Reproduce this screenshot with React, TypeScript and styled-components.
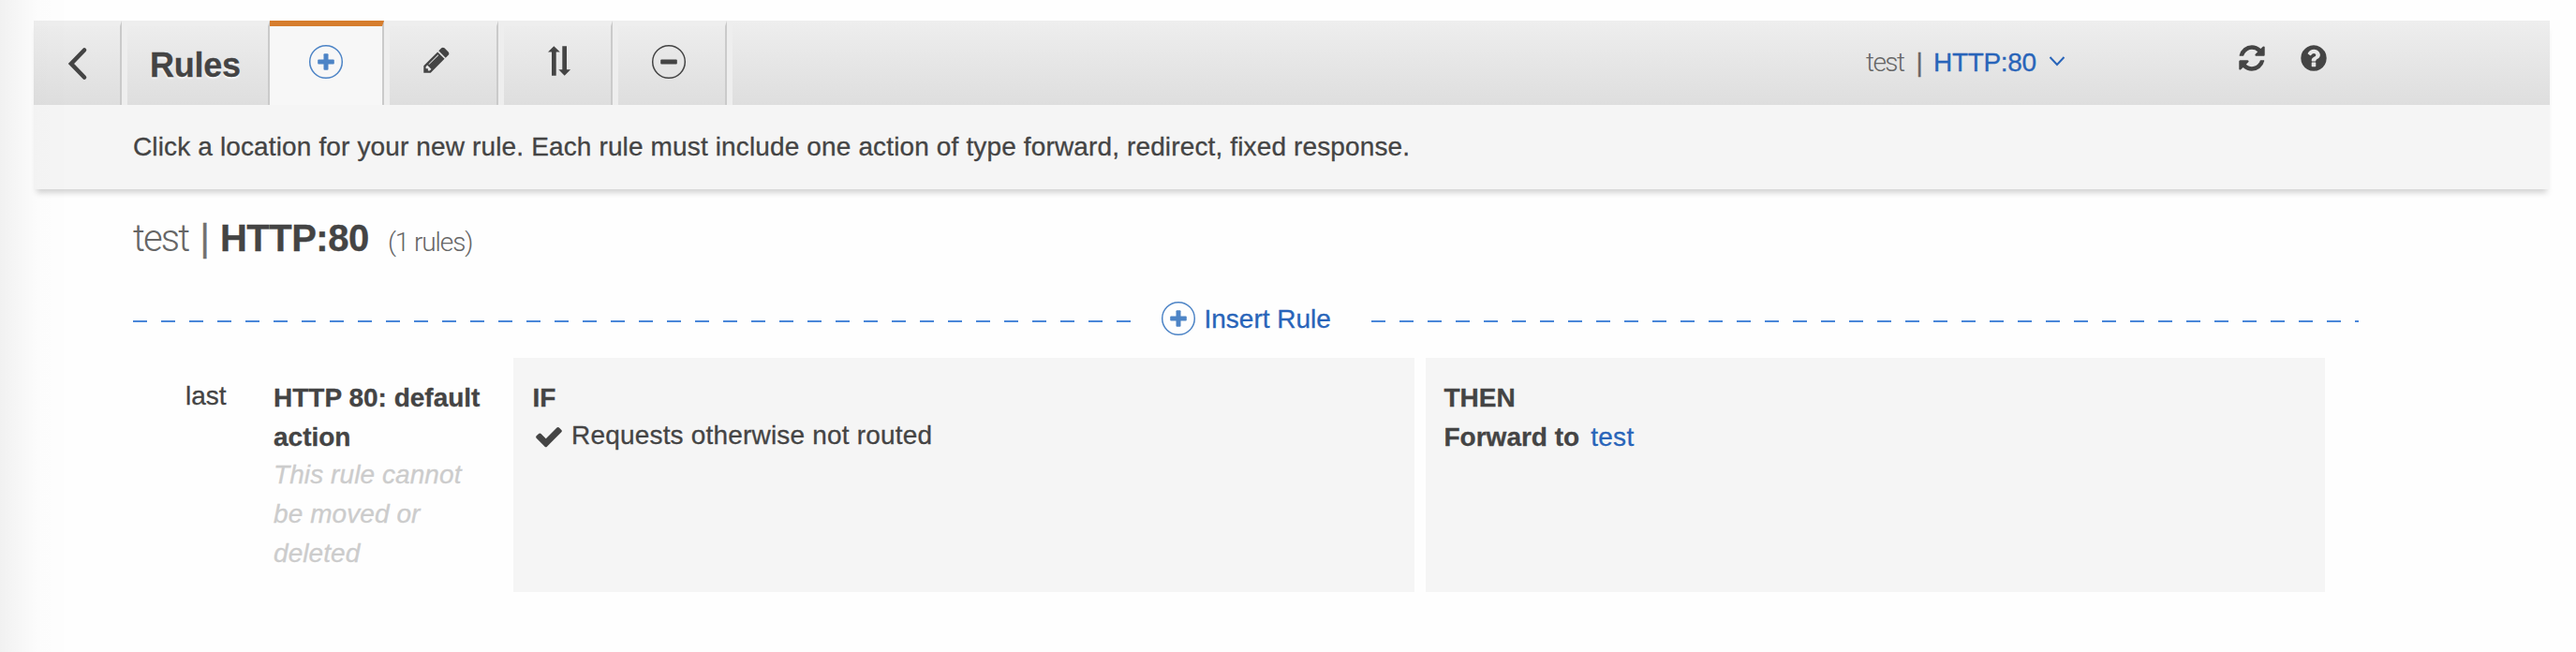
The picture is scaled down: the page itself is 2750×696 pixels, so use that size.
import React from "react";
import styled, { createGlobalStyle } from "styled-components";

const INK = "#444444";
const LINK = "#2864b9";
const ACTION = "#4d84c6";

const GlobalStyle = createGlobalStyle`
  *, *::before, *::after { box-sizing: border-box; }
  body {
    margin: 0;
    background: #fefefe;
    color: ${INK};
    font-family: "Liberation Sans", Arial, sans-serif;
    font-size: 28px;
    line-height: 42px;
    -webkit-text-stroke: 0.3px currentColor;
  }
  svg { display: block; flex: none; }
`;

const Page = styled.div`
  position: relative;
  height: 696px;
  padding: 22px 28px 0 36px;
  overflow: hidden;
  white-space: nowrap;
`;

const EdgeShade = styled.div`
  position: absolute;
  left: 0;
  top: 0;
  width: 68px;
  height: 100%;
  background: linear-gradient(to right, rgba(0, 0, 0, 0.05), rgba(0, 0, 0, 0.008) 60%, rgba(0, 0, 0, 0.004));
  pointer-events: none;
`;

const Header = styled.header`
  height: 180px;
  background: #f5f5f5;
  box-shadow: 0 7px 6px -3px rgba(0, 0, 0, 0.17);
`;

const Toolbar = styled.div`
  display: flex;
  height: 90px;
  background: linear-gradient(#eeeeee, #dedede);
`;

const Tab = styled.div<{ $width: number; $left: number; $top: number; $active?: boolean; $first?: boolean }>`
  display: flex;
  align-items: flex-start;
  width: ${(p) => p.$width}px;
  height: 90px;
  padding: ${(p) => p.$top}px 0 0 ${(p) => p.$left}px;
  border-style: solid;
  border-width: 6px 2px 0 ${(p) => (p.$active || p.$first ? 0 : 6)}px;
  border-color: ${(p) => (p.$active ? "#d67d2d" : "#eeeeee")} #cacaca transparent #eeeeee;
  background: ${(p) => (p.$active ? "#f7f7f7" : "transparent")};
  color: ${(p) => (p.$active ? ACTION : INK)};
`;

const TabTitle = styled.h1`
  margin: 0;
  font-size: 36px;
  line-height: 83px;
  font-weight: 700;
  letter-spacing: -0.25px;
  text-shadow: 0 2px 2px rgba(255, 255, 255, 0.85);
`;

const ToolbarEnd = styled.div`
  width: 6px;
  height: 90px;
  background: #eeeeee;
`;

const Listener = styled.div`
  display: flex;
  margin-left: auto;
  width: 396px;
  line-height: 89px;
`;

const ListenerOwner = styled.span`
  width: 53.5px;
  font-family: Roboto, sans-serif;
  font-weight: 300;
  letter-spacing: -1.6px;
  color: #666666;
  -webkit-text-stroke: 0;
`;

const ListenerBar = styled.span`
  width: 18.5px;
  color: #666666;
`;

const ListenerName = styled.a`
  width: 122px;
  letter-spacing: -0.33px;
  color: ${LINK};
`;

const CaretSlot = styled.span`
  padding-top: 36px;
  color: ${LINK};
`;

const Tools = styled.div`
  display: flex;
  gap: 34px;
  width: 334px;
  padding-top: 24px;
`;

const Hint = styled.p`
  margin: 0;
  padding-left: 106px;
  line-height: 89px;
  letter-spacing: 0.138px;
`;

const Content = styled.main`
  padding: 27px 0 0 106px;
`;

const Heading = styled.h2`
  display: grid;
  grid-template-columns: 71.5px 21.5px 179px auto;
  align-items: baseline;
  margin: 0;
  height: 50px;
  font-size: 40px;
  line-height: 50px;
  font-weight: 400;
`;

const HeadingOwner = styled.span`
  font-family: Roboto, sans-serif;
  font-weight: 300;
  letter-spacing: -1.9px;
  color: #666666;
  -webkit-text-stroke: 0;
`;

const HeadingBar = styled.span`
  color: #707070;
`;

const HeadingName = styled.span`
  font-weight: 700;
  letter-spacing: -0.52px;
`;

const RuleCount = styled.small`
  font-family: Roboto, sans-serif;
  font-size: 28px;
  font-weight: 300;
  letter-spacing: -1.1px;
  color: #666666;
  -webkit-text-stroke: 0;
`;

const InsertRow = styled.div`
  display: flex;
  height: 41px;
  margin-top: 41px;
`;

const Dashes = styled.div<{ $width: number }>`
  width: ${(p) => p.$width}px;
  height: 2px;
  margin-top: 22px;
  background: repeating-linear-gradient(to right, #4a87d9 0 15px, transparent 15px 30px);
`;

const InsertButton = styled.div`
  display: flex;
  gap: 8.5px;
  width: 254px;
  padding-left: 29px;
  line-height: 41px;
  color: ${LINK};

  svg {
    margin-top: 1px;
    color: ${ACTION};
  }
`;

const RuleRow = styled.section`
  display: grid;
  grid-template-columns: 150px 256px 962px 12px 960px;
  height: 250px;
  margin-top: 21px;
`;

const Position = styled.div`
  padding: 19.5px 0 0 56px;
`;

const RuleName = styled.div`
  width: 232px;
  padding-top: 21.5px;
  font-weight: 700;
  white-space: normal;
`;

const RuleNote = styled.p`
  margin: -2px 0 0;
  font-weight: 400;
  font-style: italic;
  letter-spacing: 0.08px;
  color: #cccccc;
`;

const Card = styled.div<{ $inset: number }>`
  padding: 21.5px 0 0 ${(p) => p.$inset}px;
  background: #f5f5f5;
`;

const CardTitle = styled.h3`
  margin: 0;
  font-size: 28px;
  line-height: 42px;
  font-weight: 700;
`;

const Condition = styled.div`
  display: flex;
  gap: 8px;
  margin-top: -2px;
  padding-left: 1.5px;
  letter-spacing: 0.19px;

  svg {
    margin-top: 6.5px;
  }
`;

const Action = styled.div`
  display: flex;
  gap: 12px;
  font-weight: 700;
`;

const TargetLink = styled.a`
  font-weight: 400;
  letter-spacing: 0.3px;
  color: ${LINK};
`;

const Glyph = ({ d }: { d: string }) => (
  <svg width="32" height="32" viewBox="0 0 1792 1792" fill="currentColor">
    <path d={d} />
  </svg>
);

const PENCIL =
  "M491 1536l91-91-235-235-91 91v107h128v128h107zm523-928q0-22-22-22-10 0-17 7l-542 542q-7 7-7 17 0 22 22 22 10 0 17-7l542-542q7-7 7-17zm-54-192l416 416-832 832H128v-416zm683 96q0 53-37 90l-166 166-416-416 166-165q36-38 90-38 53 0 91 38l235 234q37 39 37 91z";
const REFRESH =
  "M1639 1056q0 5-1 7-64 268-268 434.500T892 1664q-146 0-282.500-55T366 1452l-129 129q-19 19-45 19t-45-19-19-45v-448q0-26 19-45t45-19h448q26 0 45 19t19 45-19 45l-137 137q71 66 161 102t187 36q134 0 250-65t186-179q11-17 53-117 8-23 30-23h192q13 0 22.500 9.500t9.500 22.500zm25-800v448q0 26-19 45t-45 19h-448q-26 0-45-19t-19-45 19-45l138-138Q1097 384 896 384q-134 0-250 65T460 628q-11 17-53 117-8 23-30 23H178q-13 0-22.500-9.500T146 736v-7q65-268 270-434.500T896 128q146 0 284 55.500T1425 340l130-129q19-19 45-19t45 19 19 45z";
const QUESTION =
  "M1024 1376v-192q0-14-9-23t-23-9H800q-14 0-23 9t-9 23v192q0 14 9 23t23 9h192q14 0 23-9t9-23zm256-672q0-88-55.500-163T1086 425t-170-41q-243 0-371 213-15 24 8 42l132 100q7 6 19 6 16 0 25-12 53-68 86-92 34-24 86-24 48 0 85.500 26t37.500 59q0 38-20 61t-68 45q-63 28-115.500 86.500t-52.500 125.500v36q0 14 9 23t23 9h192q14 0 23-9t9-23q0-19 21.500-49.500t54.500-49.500q32-18 49-28.500t46-35 44.500-48 28-60.500 12.500-81zm384 192q0 209-103 385.500T1281.500 1561 896 1664t-385.500-103T231 1281.500 128 896t103-385.500T510.500 231 896 128t385.500 103T1561 510.500 1664 896z";
const CHECK =
  "M1671 566q0 40-28 68l-724 724-136 136q-28 28-68 28t-68-28l-136-136-362-362q-28-28-28-68t28-68l136-136q28-28 68-28t68 28l294 295 656-657q28-28 68-28t68 28l136 136q28 28 28 68z";

const CircleIcon = ({ plus }: { plus?: boolean }) => (
  <svg width="38" height="38" viewBox="0 0 38 38">
    <circle cx="19" cy="19" r="17.3" fill="none" stroke="currentColor" strokeWidth="1.5" />
    <rect x="10.2" y="16.5" width="17.6" height="5" rx="1" fill="currentColor" />
    {plus && <rect x="16.5" y="10.2" width="5" height="17.6" rx="1" fill="currentColor" />}
  </svg>
);

const BackIcon = () => (
  <svg width="22" height="38" viewBox="0 0 22 38" fill="none" stroke="currentColor" strokeWidth="4.6">
    <path d="M18 4.5L4 19L18 33.5" strokeLinecap="round" />
  </svg>
);

const SortIcon = () => (
  <svg width="26" height="34" viewBox="0 0 26 34" fill="currentColor">
    <path d="M7.3 1.2L13.8 7.4H9.7V32.7H5V7.4H1z" />
    <path d="M16.3 1.3H21V26.2H25.1L18.7 32.7L12.3 26.2H16.3z" />
  </svg>
);

const CaretIcon = () => (
  <svg width="20" height="14" viewBox="0 0 20 14" fill="none" stroke="currentColor" strokeWidth="2">
    <path d="M2.5 3L10 11L17.5 3" />
  </svg>
);

export default function App() {
  return (
    <>
      <GlobalStyle />
      <Page>
        <Header>
          <Toolbar>
            <Tab $width={94} $left={36} $top={21} $first>
              <BackIcon />
            </Tab>
            <Tab $width={158} $left={24} $top={0}>
              <TabTitle>Rules</TabTitle>
            </Tab>
            <Tab $width={122} $left={41} $top={19} $active>
              <CircleIcon plus />
            </Tab>
            <Tab $width={122} $left={34} $top={20}>
              <Glyph d={PENCIL} />
            </Tab>
            <Tab $width={122} $left={46} $top={20}>
              <SortIcon />
            </Tab>
            <Tab $width={122} $left={35} $top={19}>
              <CircleIcon />
            </Tab>
            <ToolbarEnd />
            <Listener>
              <ListenerOwner>test</ListenerOwner>
              <ListenerBar>|</ListenerBar>
              <ListenerName>HTTP:80</ListenerName>
              <CaretSlot>
                <CaretIcon />
              </CaretSlot>
            </Listener>
            <Tools>
              <Glyph d={REFRESH} />
              <Glyph d={QUESTION} />
            </Tools>
          </Toolbar>
          <Hint>
            Click a location for your new rule. Each rule must include one action of type forward, redirect, fixed
            response.
          </Hint>
        </Header>
        <Content>
          <Heading>
            <HeadingOwner>test</HeadingOwner>
            <HeadingBar>|</HeadingBar>
            <HeadingName>HTTP:80</HeadingName>
            <RuleCount>(1 rules)</RuleCount>
          </Heading>
          <InsertRow>
            <Dashes $width={1068} />
            <InsertButton>
              <CircleIcon plus />
              Insert Rule
            </InsertButton>
            <Dashes $width={1054} />
          </InsertRow>
          <RuleRow>
            <Position>last</Position>
            <RuleName>
              HTTP 80: default action
              <RuleNote>This rule cannot be moved or deleted</RuleNote>
            </RuleName>
            <Card $inset={20.5}>
              <CardTitle>IF</CardTitle>
              <Condition>
                <Glyph d={CHECK} />
                Requests otherwise not routed
              </Condition>
            </Card>
            <span />
            <Card $inset={19.5}>
              <CardTitle>THEN</CardTitle>
              <Action>
                Forward to
                <TargetLink>test</TargetLink>
              </Action>
            </Card>
          </RuleRow>
        </Content>
        <EdgeShade />
      </Page>
    </>
  );
}
